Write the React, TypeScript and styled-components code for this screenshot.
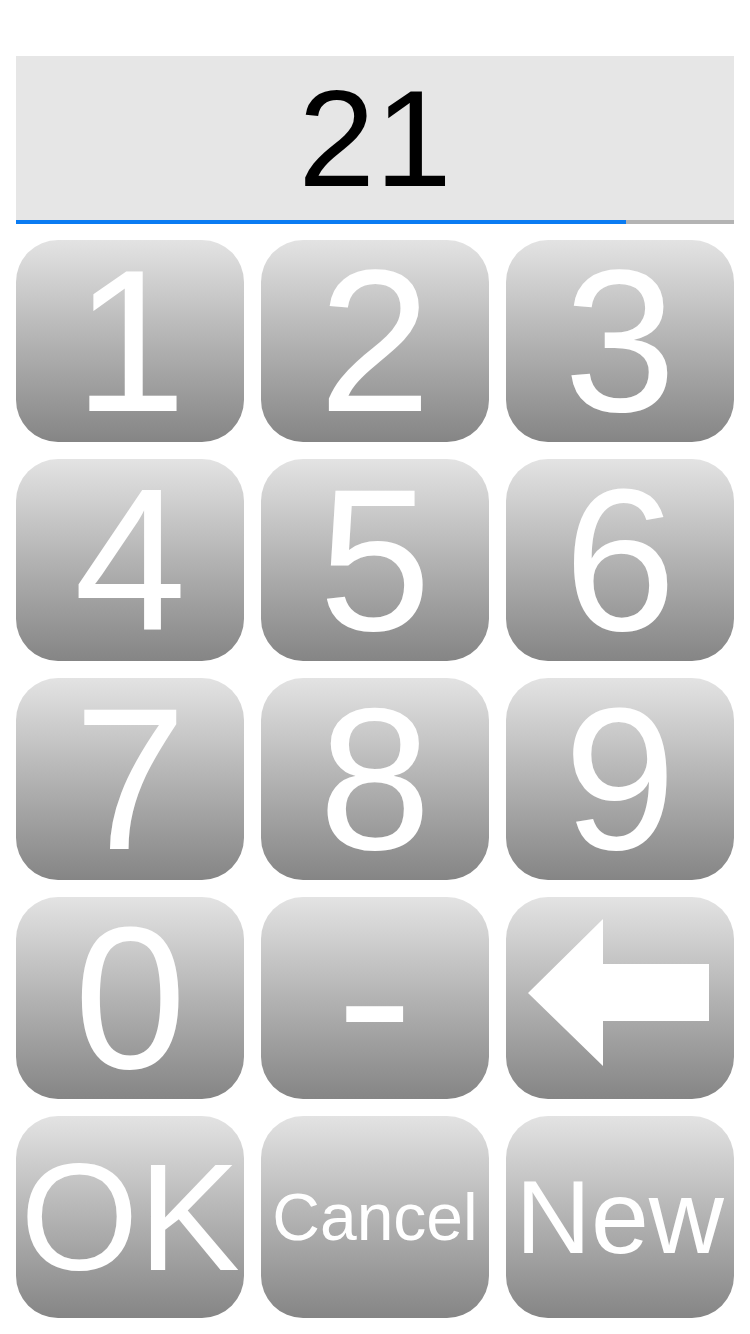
import React from "react";
import styled, { createGlobalStyle } from "styled-components";

const GlobalStyle = createGlobalStyle`
	html, body {
		margin: 0;
		padding: 0;
		background: #ffffff;
	}
	body {
		font-family: "Liberation Sans", Arial, Helvetica, sans-serif;
	}
`;

const Page = styled.div`
	width: 750px;
	padding: 56px 16px 0;
	box-sizing: border-box;
`;

const Display = styled.div`
	height: 164px;
	background: #e6e6e6;
	display: flex;
	align-items: center;
	justify-content: center;
	font-size: 138px;
	line-height: 1;
	color: #000000;
`;

const Track = styled.div`
	height: 4px;
	background: #b3b3b3;
	display: flex;
`;

const Fill = styled.div<{ $progress: number }>`
	width: ${(p) => p.$progress}%;
	background: #0a7bf2;
`;

const Pad = styled.div`
	margin-top: 16px;
	display: grid;
	grid-template-columns: repeat(3, 1fr);
	grid-auto-rows: 202px;
	column-gap: 16.5px;
	row-gap: 17px;
`;

const Key = styled.button<{ $size?: number }>`
	border: none;
	padding: 0;
	margin: 0;
	border-radius: 42px;
	background: linear-gradient(to bottom, #e3e3e3 0%, #b3b3b3 50%, #858585 100%);
	color: #ffffff;
	font-family: "Liberation Sans", Arial, Helvetica, sans-serif;
	font-size: ${(p) => p.$size || 202}px;
	line-height: 1;
	display: flex;
	align-items: center;
	justify-content: center;
	overflow: visible;
	white-space: nowrap;
	cursor: pointer;
`;

const Dash = styled.span`
	display: inline-block;
	transform: scaleX(1.15);
`;

const Arrow = styled.svg`
	width: 181px;
	height: 147px;
	margin-bottom: 11px;
	margin-left: -2px;
`;

const BackArrow = () => (
	<Arrow viewBox="0 0 181 147">
		<polygon points="0,74 75,0 75,45 181,45 181,102 75,102 75,147" fill="#ffffff" />
	</Arrow>
);

const App = () => {
	const digits = ["1", "2", "3", "4", "5", "6", "7", "8", "9", "0"];
	return (
		<>
			<GlobalStyle />
			<Page>
				<Display>21</Display>
				<Track>
					<Fill $progress={85} />
				</Track>
				<Pad>
					{digits.map((d) => (
						<Key key={d}>{d}</Key>
					))}
					<Key>
						<Dash>-</Dash>
					</Key>
					<Key aria-label="Backspace">
						<BackArrow />
					</Key>
					<Key $size={152}>OK</Key>
					<Key $size={66}>Cancel</Key>
					<Key $size={104}>New</Key>
				</Pad>
			</Page>
		</>
	);
};

export default App;
